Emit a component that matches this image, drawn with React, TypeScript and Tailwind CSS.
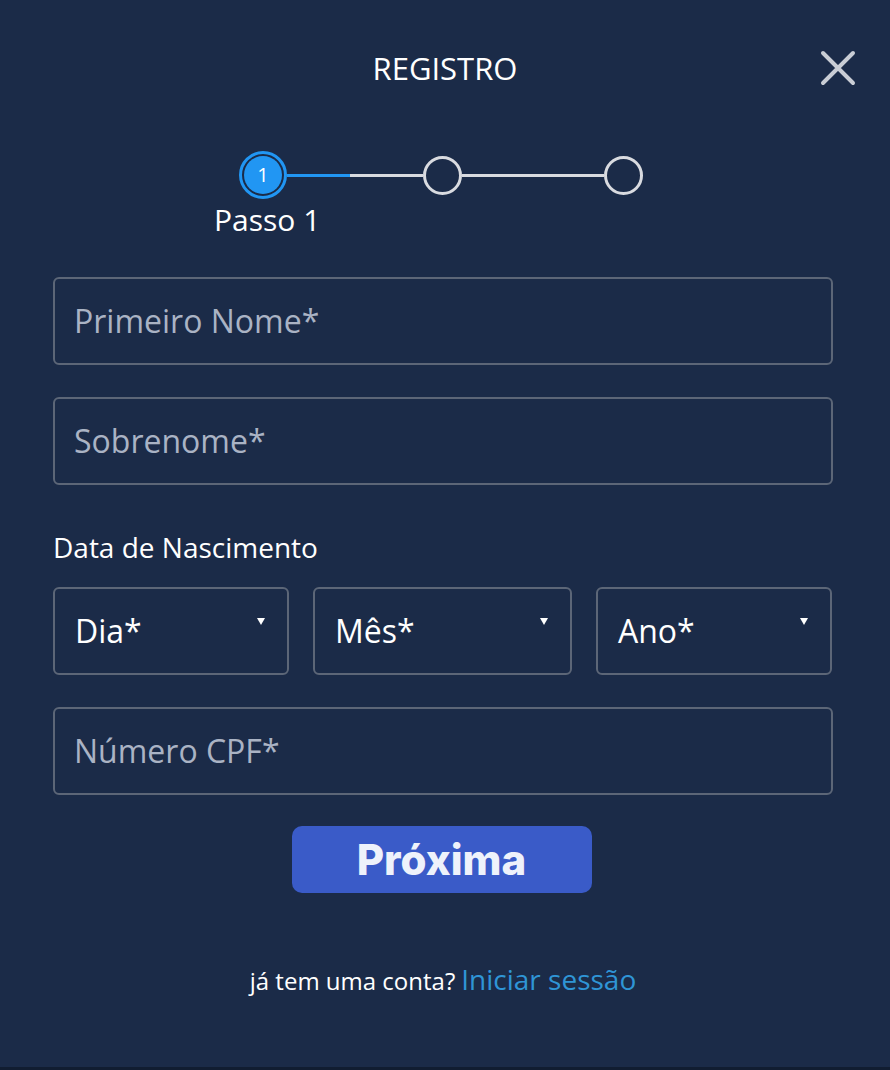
const font = { fontFamily: '"Open Sans", "Noto Sans", sans-serif' }

const TextField = ({ placeholder }: { placeholder: string }) => (
	<div className="h-[88px] w-full rounded-[6px] border-2 border-[#5c6677] flex items-center px-[19px]">
		<span className="text-[32px] text-[#aab3c4]">{placeholder}</span>
	</div>
)

const SelectField = ({ label, width }: { label: string; width: string }) => (
	<div className={`${width} h-[88px] rounded-[6px] border-2 border-[#5c6677] flex items-center justify-between pl-[20px] pr-[22px]`}>
		<span className="text-[32px] text-white">{label}</span>
		<span className="w-0 h-0 border-l-[4px] border-r-[4px] border-t-[7px] border-l-transparent border-r-transparent border-t-white -mt-[20px]" />
	</div>
)

const Stepper = () => (
	<div className="flex flex-col items-start">
		<div className="flex items-center">
			<div className="size-[48px] rounded-full border-[3px] border-[#2196f3] p-[2px]">
				<div className="size-full rounded-full bg-[#2196f3] flex items-center justify-center text-white text-[20px]">1</div>
			</div>
			<div className="flex h-[3px] w-[136px]">
				<div className="w-[63px] bg-[#2196f3]" />
				<div className="flex-1 bg-[#d9dbe0]" />
			</div>
			<div className="size-[39px] rounded-full border-[3px] border-[#d9dbe0]" />
			<div className="h-[3px] w-[142px] bg-[#d9dbe0]" />
			<div className="size-[39px] rounded-full border-[3px] border-[#d9dbe0]" />
		</div>
		<div className="text-white text-[30px] -ml-[25px] mt-[6px] leading-none">Passo 1</div>
	</div>
)

export default function App() {
	return (
		<div className="w-[890px] h-[1070px] bg-[#1b2b48] relative flex flex-col" style={font}>
			<button className="absolute left-[820px] top-[50px]">
				<svg width="36" height="36" viewBox="0 0 36 36" fill="none" stroke="#c9cdd5" strokeWidth="4" strokeLinecap="round">
					<path d="M3 3 L33 33 M33 3 L3 33" />
				</svg>
			</button>
			<div className="flex flex-col items-center pt-[53px]">
				<h1 className="text-white text-[31px] leading-none">REGISTRO</h1>
			</div>
			<div className="mt-[67px] pl-[239px]">
				<Stepper />
			</div>
			<div className="pl-[53px] pr-[57px] mt-[42px] flex flex-col flex-1">
				<TextField placeholder="Primeiro Nome*" />
				<div className="mt-[32px]">
					<TextField placeholder="Sobrenome*" />
				</div>
				<div className="mt-[48px] text-white text-[28px] leading-none">Data de Nascimento</div>
				<div className="mt-[26px] flex gap-[24px]">
					<SelectField label="Dia*" width="w-[236px]" />
					<SelectField label="Mês*" width="w-[259px]" />
					<SelectField label="Ano*" width="w-[236px]" />
				</div>
				<div className="mt-[32px]">
					<TextField placeholder="Número CPF*" />
				</div>
				<div className="mt-[31px] flex justify-center ml-[-3px]">
					<button
						className="w-[300px] h-[67px] rounded-[10px] bg-[#3a5bc8] text-[#eef2fb] text-[42px] font-extrabold leading-none"
						style={{ fontFamily: 'Inter, "Open Sans", sans-serif' }}
					>
						Próxima
					</button>
				</div>
				<div className="mt-[72px] flex justify-center items-baseline gap-[6px] leading-none">
					<span className="text-white text-[24px]">já tem uma conta?</span>
					<span className="text-[#2f95d6] text-[28px]">Iniciar sessão</span>
				</div>
			</div>
			<div className="h-[3px] bg-[#111d31]" />
		</div>
	)
}
